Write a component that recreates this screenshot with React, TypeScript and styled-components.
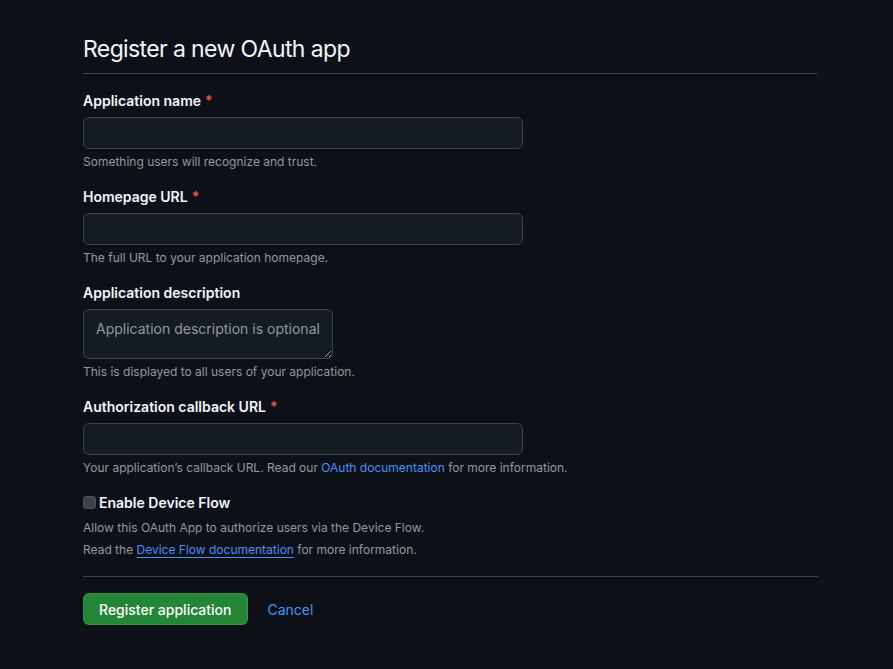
import React from 'react'
import styled, { createGlobalStyle } from 'styled-components'

const GlobalStyle = createGlobalStyle`
  html, body {
    margin: 0;
    background: #0d1117;
  }
  body {
    font-family: Inter, "Noto Sans", sans-serif;
    color: #f0f6fc;
  }
`

const Page = styled.main`
  padding: 34px 0 40px 83px;
  width: 735px;
`

const Title = styled.h1`
  margin: 0;
  font-size: 23px;
  font-weight: 400;
  line-height: 30px;
  padding-bottom: 9px;
  border-bottom: 1px solid #3d444d;
  letter-spacing: -0.62px;
`

const Form = styled.form`
  display: flex;
  flex-direction: column;
`

const Group = styled.div<{ $space?: number }>`
  display: flex;
  flex-direction: column;
  align-items: flex-start;
  margin-top: ${(p) => p.$space ?? 15}px;
`

const Label = styled.label`
  font-size: 14px;
  font-weight: 600;
  line-height: 21px;
  margin-bottom: 6px;
`

const Required = styled.span`
  color: #f85149;
  margin-left: 4px;
`

const TextInput = styled.input`
  box-sizing: border-box;
  width: 440px;
  height: 32px;
  padding: 5px 12px;
  background: #151b23;
  border: 1px solid #3d444d;
  border-radius: 6px;
  color: #f0f6fc;
  font: inherit;
  font-size: 14px;
  outline: none;
`

const TextArea = styled.textarea`
  box-sizing: border-box;
  width: 250px;
  height: 50px;
  padding: 9px 12px;
  background: #151b23;
  border: 1px solid #3d444d;
  border-radius: 6px;
  color: #f0f6fc;
  font: inherit;
  font-size: 14px;
  line-height: 20px;
  outline: none;
  resize: vertical;
  &::placeholder {
    color: #9198a1;
  }
`

const Note = styled.p`
  margin: 4px 0 0;
  font-size: 12px;
  line-height: 18px;
  color: #9198a1;
`

const Link = styled.a<{ $underline?: boolean }>`
  color: #4493f8;
  text-decoration: ${(p) => (p.$underline ? 'underline' : 'none')};
  text-underline-offset: 3px;
`

const CheckRow = styled.label`
  display: flex;
  align-items: center;
  gap: 3px;
  font-size: 14px;
  font-weight: 600;
  line-height: 21px;
`

const Check = styled.input`
  appearance: none;
  margin: 0;
  width: 13px;
  height: 13px;
  border-radius: 3px;
  background: #3d434b;
  border: 1px solid #4d535b;
  box-sizing: border-box;
`

const FlowNote = styled.p`
  margin: 6px 0 0;
  font-size: 12px;
  line-height: 18px;
  color: #9198a1;
  & + & {
    margin-top: 4px;
  }
`

const Divider = styled.hr`
  margin: 17px 0 16px;
  border: 0;
  border-top: 1px solid #3d444d;
`

const Actions = styled.div`
  display: flex;
  align-items: center;
  gap: 20px;
`

const PrimaryButton = styled.button`
  height: 32px;
  padding: 0 15px;
  background: #238636;
  border: 1px solid rgba(240, 246, 252, 0.1);
  border-radius: 6px;
  color: #ffffff;
  font: inherit;
  font-size: 14px;
  font-weight: 500;
  cursor: pointer;
`

const CancelLink = styled.a`
  color: #4493f8;
  font-size: 14px;
  text-decoration: none;
`

export default function App() {
  return (
    <>
      <GlobalStyle />
      <Page>
        <Title>Register a new OAuth app</Title>
        <Form onSubmit={(e) => e.preventDefault()}>
          <Group $space={16}>
            <Label>
              Application name<Required>*</Required>
            </Label>
            <TextInput type="text" />
            <Note>Something users will recognize and trust.</Note>
          </Group>
          <Group>
            <Label>
              Homepage URL<Required>*</Required>
            </Label>
            <TextInput type="text" />
            <Note>The full URL to your application homepage.</Note>
          </Group>
          <Group>
            <Label>Application description</Label>
            <TextArea placeholder="Application description is optional" />
            <Note>This is displayed to all users of your application.</Note>
          </Group>
          <Group>
            <Label>
              Authorization callback URL<Required>*</Required>
            </Label>
            <TextInput type="text" />
            <Note>
              Your application’s callback URL. Read our <Link href="#">OAuth documentation</Link> for more
              information.
            </Note>
          </Group>
          <Group>
            <CheckRow>
              <Check type="checkbox" />
              Enable Device Flow
            </CheckRow>
            <FlowNote>Allow this OAuth App to authorize users via the Device Flow.</FlowNote>
            <FlowNote>
              Read the <Link href="#" $underline>Device Flow documentation</Link> for more information.
            </FlowNote>
          </Group>
          <Divider />
          <Actions>
            <PrimaryButton type="submit">Register application</PrimaryButton>
            <CancelLink href="#">Cancel</CancelLink>
          </Actions>
        </Form>
      </Page>
    </>
  )
}
